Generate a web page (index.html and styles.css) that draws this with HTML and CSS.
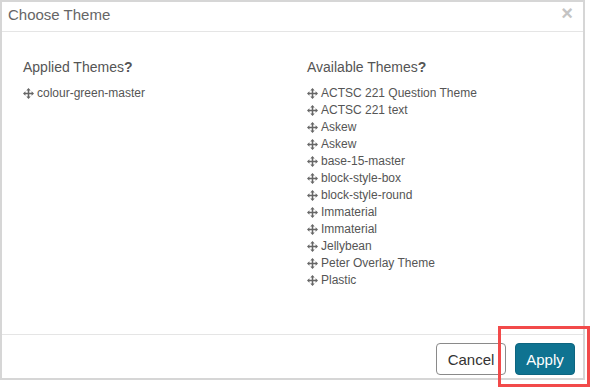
FILE: index.html
```html
<!DOCTYPE html>
<html lang="en">
<head>
  <meta charset="UTF-8" />
  <title>Choose Theme</title>
  <link rel="stylesheet" href="styles.css">
</head>
<body>
  <div class="dialog">
    <div class="dialog-header">
      <span class="dialog-title">Choose Theme</span>
      <span class="close">&times;</span>
    </div>

    <div class="dialog-body">
      <div class="column applied">
        <h4>Applied Themes<b>?</b></h4>
        <ul class="theme-list">
          <li><svg class="move" viewBox="0 0 10 10"><path d="M5 0L7 2.2H5.7V4.3H7.8V3L10 5L7.8 7V5.7H5.7V7.8H7L5 10L3 7.8H4.3V5.7H2.2V7L0 5L2.2 3V4.3H4.3V2.2H3Z"/></svg>colour-green-master</li>
        </ul>
      </div>

      <div class="column available">
        <h4>Available Themes<b>?</b></h4>
        <ul class="theme-list">
          <li><svg class="move" viewBox="0 0 10 10"><path d="M5 0L7 2.2H5.7V4.3H7.8V3L10 5L7.8 7V5.7H5.7V7.8H7L5 10L3 7.8H4.3V5.7H2.2V7L0 5L2.2 3V4.3H4.3V2.2H3Z"/></svg>ACTSC 221 Question Theme</li>
          <li><svg class="move" viewBox="0 0 10 10"><path d="M5 0L7 2.2H5.7V4.3H7.8V3L10 5L7.8 7V5.7H5.7V7.8H7L5 10L3 7.8H4.3V5.7H2.2V7L0 5L2.2 3V4.3H4.3V2.2H3Z"/></svg>ACTSC 221 text</li>
          <li><svg class="move" viewBox="0 0 10 10"><path d="M5 0L7 2.2H5.7V4.3H7.8V3L10 5L7.8 7V5.7H5.7V7.8H7L5 10L3 7.8H4.3V5.7H2.2V7L0 5L2.2 3V4.3H4.3V2.2H3Z"/></svg>Askew</li>
          <li><svg class="move" viewBox="0 0 10 10"><path d="M5 0L7 2.2H5.7V4.3H7.8V3L10 5L7.8 7V5.7H5.7V7.8H7L5 10L3 7.8H4.3V5.7H2.2V7L0 5L2.2 3V4.3H4.3V2.2H3Z"/></svg>Askew</li>
          <li><svg class="move" viewBox="0 0 10 10"><path d="M5 0L7 2.2H5.7V4.3H7.8V3L10 5L7.8 7V5.7H5.7V7.8H7L5 10L3 7.8H4.3V5.7H2.2V7L0 5L2.2 3V4.3H4.3V2.2H3Z"/></svg>base-15-master</li>
          <li><svg class="move" viewBox="0 0 10 10"><path d="M5 0L7 2.2H5.7V4.3H7.8V3L10 5L7.8 7V5.7H5.7V7.8H7L5 10L3 7.8H4.3V5.7H2.2V7L0 5L2.2 3V4.3H4.3V2.2H3Z"/></svg>block-style-box</li>
          <li><svg class="move" viewBox="0 0 10 10"><path d="M5 0L7 2.2H5.7V4.3H7.8V3L10 5L7.8 7V5.7H5.7V7.8H7L5 10L3 7.8H4.3V5.7H2.2V7L0 5L2.2 3V4.3H4.3V2.2H3Z"/></svg>block-style-round</li>
          <li><svg class="move" viewBox="0 0 10 10"><path d="M5 0L7 2.2H5.7V4.3H7.8V3L10 5L7.8 7V5.7H5.7V7.8H7L5 10L3 7.8H4.3V5.7H2.2V7L0 5L2.2 3V4.3H4.3V2.2H3Z"/></svg>Immaterial</li>
          <li><svg class="move" viewBox="0 0 10 10"><path d="M5 0L7 2.2H5.7V4.3H7.8V3L10 5L7.8 7V5.7H5.7V7.8H7L5 10L3 7.8H4.3V5.7H2.2V7L0 5L2.2 3V4.3H4.3V2.2H3Z"/></svg>Immaterial</li>
          <li><svg class="move" viewBox="0 0 10 10"><path d="M5 0L7 2.2H5.7V4.3H7.8V3L10 5L7.8 7V5.7H5.7V7.8H7L5 10L3 7.8H4.3V5.7H2.2V7L0 5L2.2 3V4.3H4.3V2.2H3Z"/></svg>Jellybean</li>
          <li><svg class="move" viewBox="0 0 10 10"><path d="M5 0L7 2.2H5.7V4.3H7.8V3L10 5L7.8 7V5.7H5.7V7.8H7L5 10L3 7.8H4.3V5.7H2.2V7L0 5L2.2 3V4.3H4.3V2.2H3Z"/></svg>Peter Overlay Theme</li>
          <li><svg class="move" viewBox="0 0 10 10"><path d="M5 0L7 2.2H5.7V4.3H7.8V3L10 5L7.8 7V5.7H5.7V7.8H7L5 10L3 7.8H4.3V5.7H2.2V7L0 5L2.2 3V4.3H4.3V2.2H3Z"/></svg>Plastic</li>
        </ul>
      </div>
    </div>

    <div class="dialog-footer">
      <button class="btn btn-cancel">Cancel</button>
      <button class="btn btn-apply">Apply</button>
    </div>
  </div>

  <!-- annotation box round the apply button -->
  <div class="highlight"></div>
</body>
</html>
```

FILE: styles.css
```css
body {
  margin: 0;
  font-family: "Liberation Sans", Arial, sans-serif;
  background: #fff;
  color: #555;
  position: relative;
  width: 591px;
  height: 389px;
}
.dialog {
  width: 581px;
  height: 376px;
  border: 2px solid #d6d6d6;
  display: flex;
  flex-direction: column;
  background: #fff;
}
.dialog-header {
  height: 29px;
  border-bottom: 1px solid #e5e5e5;
  display: flex;
  align-items: center;
  justify-content: space-between;
  padding: 0 10px 0 6px;
}
.dialog-title {
  font-size: 15px;
  color: #666;
  margin-top: -4px;
}
.close {
  font-size: 20px;
  font-weight: bold;
  color: #c4c4c4;
  margin-top: -6px;
}
.dialog-body {
  flex: 1;
  display: grid;
  grid-template-columns: 284px 1fr;
  padding: 27px 0 0 21px;
}
.column h4 {
  margin: 0 0 9px;
  font-size: 14px;
  font-weight: normal;
  color: #555;
  line-height: 17px;
}
.column h4 b {
  color: #555;
}
.theme-list {
  list-style: none;
  margin: 0;
  padding: 0;
}
.theme-list li {
  font-size: 12px;
  line-height: 17px;
  display: flex;
  align-items: center;
  color: #555;
}
.move {
  width: 11px;
  height: 11px;
  fill: #666;
  margin-right: 3px;
}
.dialog-footer {
  height: 44px;
  border-top: 1px solid #e5e5e5;
  display: flex;
  justify-content: flex-end;
  align-items: flex-start;
  gap: 9px;
  padding: 8px 8px 0 0;
  box-sizing: border-box;
}
.btn {
  height: 32px;
  font-family: "Liberation Sans", Arial, sans-serif;
  font-size: 15px;
  border-radius: 4px;
  cursor: pointer;
}
.btn-cancel {
  width: 70px;
  background: #fff;
  border: 1px solid #8a8a8a;
  color: #333;
}
.btn-apply {
  width: 60px;
  background: #0f7391;
  border: 1px solid #0d6580;
  color: #fff;
}
.highlight {
  position: absolute;
  left: 498px;
  top: 326px;
  width: 86px;
  height: 55px;
  border: 3px solid #f24a4a;
}
```
